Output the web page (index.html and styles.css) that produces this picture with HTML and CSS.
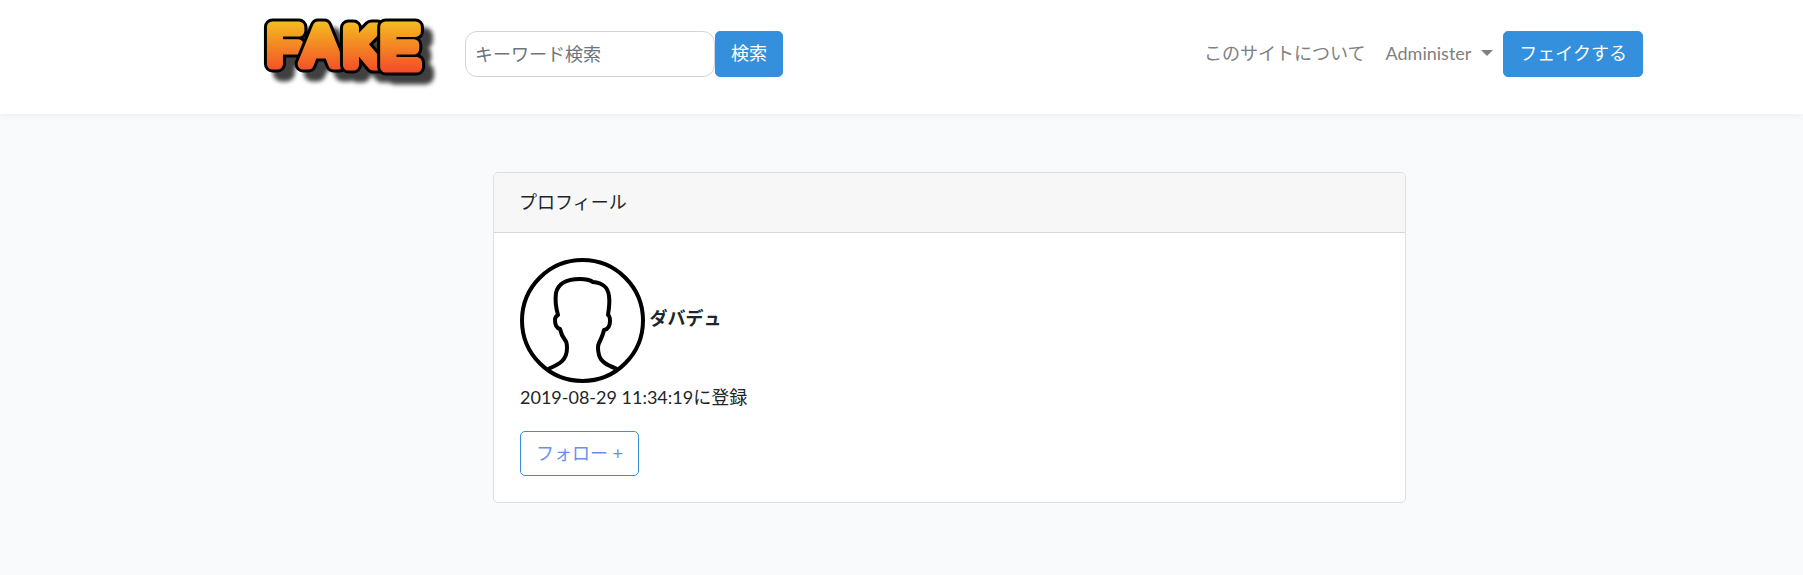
FILE: index.html
```
<!DOCTYPE html>
<html lang="ja">
<head>
    <meta charset="UTF-8">
    <meta name="viewport" content="width=device-width, initial-scale=1">
    <title>FAKE</title>
    <link rel="stylesheet" href="styles.css">
</head>
<body>
<nav class="navbar">
    <div class="container navbar-inner">
        <a class="navbar-brand" href="#" aria-label="FAKE">
            <svg class="logo" width="188" height="80" viewBox="0 0 188 80">
                <defs>
                    <linearGradient id="fire" gradientUnits="userSpaceOnUse" x1="0" y1="4" x2="0" y2="62">
                        <stop offset="0" stop-color="#f3c41f"/>
                        <stop offset="1" stop-color="#f4432a"/>
                    </linearGradient>
                    <filter id="shadow" x="-10%" y="-10%" width="130%" height="140%">
                        <feDropShadow dx="9" dy="9" stdDeviation="2" flood-color="#000" flood-opacity="0.75"/>
                    </filter>
                </defs>
                <g filter="url(#shadow)">
                    <text class="edge" x="12" y="50">F</text>
                    <text class="face" x="12" y="50">F</text>
                    <text class="edge" x="47" y="50">A</text>
                    <text class="face" x="47" y="50">A</text>
                    <text class="edge" x="88" y="51">K</text>
                    <text class="face" x="88" y="51">K</text>
                    <text class="edge big" x="125" y="53">E</text>
                    <text class="face big" x="125" y="53">E</text>
                </g>
            </svg>
        </a>
        <form class="search" action="#">
            <input class="search-input" type="search" name="keyword" placeholder="キーワード検索" aria-label="キーワード検索">
            <button class="btn btn-primary" type="submit">検索</button>
        </form>
        <ul class="navbar-nav">
            <li><a class="nav-link" href="#">このサイトについて</a></li>
            <li><a class="nav-link dropdown-toggle" href="#">Administer</a></li>
            <li><button class="btn btn-primary" type="button">フェイクする</button></li>
        </ul>
    </div>
</nav>

<main class="main">
    <div class="container">
        <div class="card">
            <div class="card-header">プロフィール</div>
            <div class="card-body">
                <div class="user">
                    <svg class="avatar" width="125" height="125" viewBox="0 0 125 125">
                        <circle cx="62.500" cy="62.500" r="60.500"/>
                        <path d="M28 111C40 106 47 102 47 90C47 87 47 84 45 82C42 78 41 76 40 71C36 70 35 66 35 62C35 60 36 58 38 57C36 50 35 42 36 35C38 26 46 21 60 21C66 21 70 22 73 24C84 25 88 30 89 38C90 45 89 51 88 57C90 58 90 60 90 63C90 67 89 71 84 72C83 77 81 81 79 85C77 89 78 93 79 97C81 105 90 108 97 111"/>
                    </svg>
                    <strong>ダバデュ</strong>
                </div>
                <p class="date">2019-08-29 11:34:19に登録</p>
                <button class="btn btn-outline" type="button">フォロー +</button>
            </div>
        </div>
    </div>
</main>
</body>
</html>
```
FILE: styles.css
```
* {
    box-sizing: border-box;
}

body {
    margin: 0;
    background-color: #f8fafc;
    color: #212529;
    font-family: Lato, "Noto Sans CJK JP", sans-serif;
    font-size: 18px;
    line-height: 28px;
}

a {
    text-decoration: none;
}

.container {
    max-width: 1425px;
    margin: 0 auto;
    padding: 0 19px;
}

.navbar {
    height: 114px;
    padding-left: 96px;
    background-color: #fff;
    box-shadow: 0 3px 5px rgba(0, 0, 0, 0.04);
}

.navbar-inner {
    display: flex;
    align-items: flex-start;
    padding-top: 14px;
}

.navbar-brand {
    margin-right: 21px;
    line-height: 0;
}

.logo text {
    font-family: "Liberation Sans", sans-serif;
    font-size: 54px;
    stroke-linejoin: round;
}

.logo .edge {
    fill: #000;
    stroke: #000;
    stroke-width: 17px;
}

.logo .face {
    fill: url(#fire);
    stroke: url(#fire);
    stroke-width: 11px;
}

.logo .big {
    font-size: 57px;
}

.search {
    display: flex;
    margin-top: 17px;
}

.search-input {
    width: 250px;
    height: 46px;
    padding: 0 9px 1px;
    border: 1px solid #ced4da;
    border-radius: 12px;
    background-color: #fff;
    font: inherit;
    appearance: none;
}

.search-input::placeholder {
    color: #6c757d;
    opacity: 1;
}

.btn {
    height: 46px;
    padding: 0 15px 2px;
    border: 1px solid #3490dc;
    border-radius: 5px;
    font: inherit;
    cursor: pointer;
}

.btn-primary {
    background-color: #3490dc;
    color: #fff;
}

.btn-outline {
    display: block;
    height: 45px;
    background-color: transparent;
    color: #6690ee;
}

.navbar-nav {
    display: flex;
    align-items: center;
    margin: 17px 0 0 auto;
    padding: 0;
    list-style: none;
}

.nav-link {
    display: block;
    padding: 0 10px 2px;
    color: #808080;
}

.dropdown-toggle::after {
    content: "";
    display: inline-block;
    margin-left: 10px;
    vertical-align: 4px;
    border-top: 6px solid;
    border-right: 6px solid transparent;
    border-left: 6px solid transparent;
}

.main {
    padding: 58px 0 72px 96px;
}

.card {
    max-width: 913px;
    margin: 0 auto;
    border: 1px solid #dfdfdf;
    border-radius: 5px;
    background-color: #fff;
}

.card-header {
    padding: 15px 25px 16px;
    border-bottom: 1px solid #d8d8d8;
    border-radius: 4px 4px 0 0;
    background-color: #f7f7f7;
}

.card-body {
    padding: 25px 26px 26px;
}

.user {
    line-height: 24px;
}

.avatar {
    vertical-align: middle;
    fill: none;
    stroke: #000;
    stroke-width: 4px;
    stroke-linejoin: round;
}

.date {
    margin: 0 0 20px;
}
```
